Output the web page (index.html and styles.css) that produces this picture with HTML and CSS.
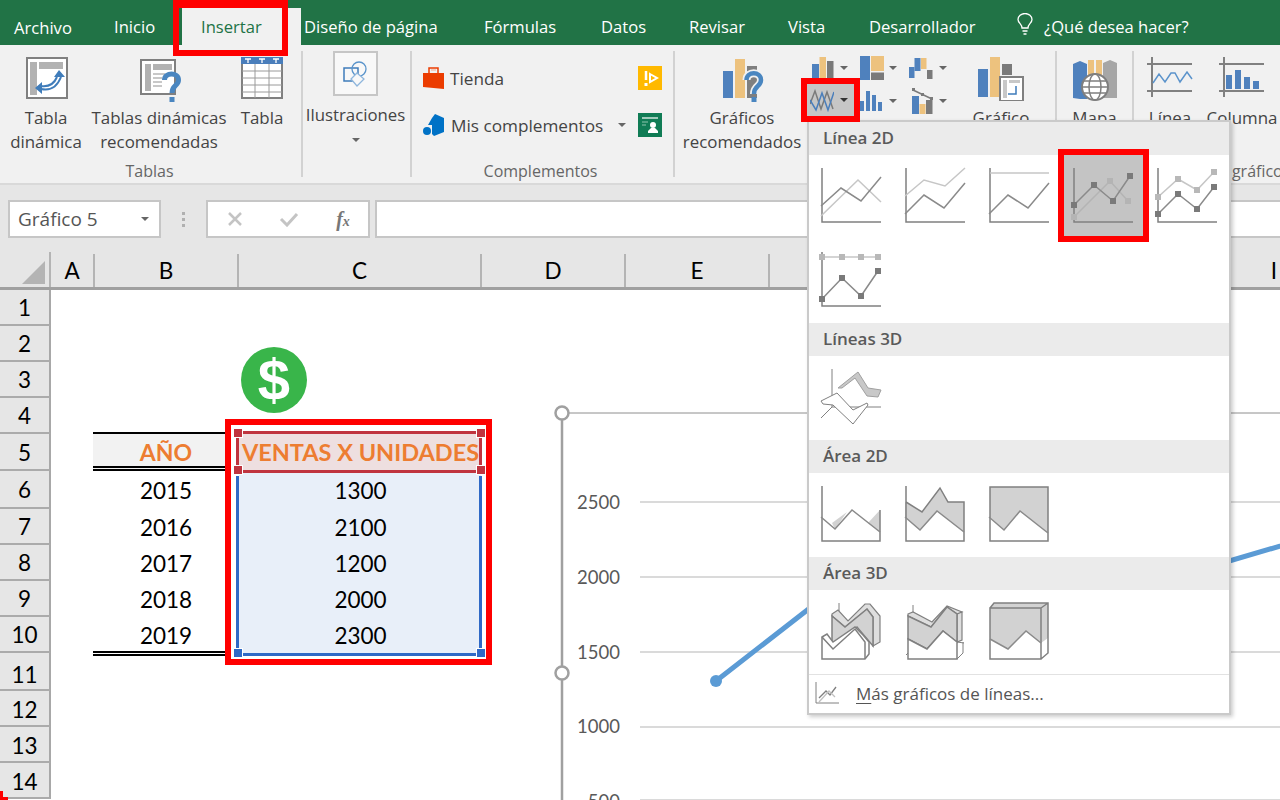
FILE: index.html
```html
<!DOCTYPE html>
<html lang="es">
<head>
<meta charset="utf-8">
<title>Excel - Insertar gráfico</title>
<link rel="stylesheet" href="styles.css">
</head>
<body>
<div class="app">
  <nav class="tabs">
    <span class="tab tab-file">Archivo</span>
    <span class="tab">Inicio</span>
    <span class="tab tab-active">Insertar</span>
    <span class="tab">Diseño de página</span>
    <span class="tab">Fórmulas</span>
    <span class="tab">Datos</span>
    <span class="tab">Revisar</span>
    <span class="tab">Vista</span>
    <span class="tab">Desarrollador</span>
    <svg class="bulb" width="16" height="22" viewBox="0 0 16 22"><path d="M5 15 C5 11 1 10 1 6.500 A7 6 0 0 1 15 6.500 C15 10 11 11 11 15 Z M5.500 18 H10.500 M6.500 21 H9.500" fill="none" stroke="#fff" stroke-width="1.300"/></svg>
    <span class="tab">¿Qué desea hacer?</span>
  </nav>

  <section class="ribbon">
    <div class="group g-tablas">
      <div class="group-body cols-tablas">
        <div class="big">
          <div class="big-icon">
            <svg class="ic-din" width="42" height="42" viewBox="0 0 42 42"><rect x="1" y="1" width="40" height="40" fill="#fff" stroke="#808080" stroke-width="2"/><rect x="4" y="5" width="7" height="33" fill="#b2b2b2"/><rect x="13" y="5" width="24" height="7" fill="#b2b2b2"/><path d="M15 32 C24 34 31 30 35 20 M15 29 C22 30 28 27 31 20" fill="none" stroke="#3f7cba" stroke-width="2"/><path d="M33 13 L39 20 H28 Z M9 31 L16 25 V37 Z" fill="#3f7cba"/></svg>
          </div>
          <span class="big-text">Tabla<br>dinámica</span>
        </div>
        <div class="big">
          <div class="big-icon">
            <svg class="ic-rec ic-rec-t" width="42" height="44" viewBox="0 0 42 44"><rect x="1" y="1" width="34" height="34" fill="#fff" stroke="#808080" stroke-width="2"/><rect x="5" y="5" width="6" height="27" fill="#b2b2b2"/><rect x="13" y="5" width="19" height="6" fill="#b2b2b2"/><path d="M13 15 H25 M13 19 H22 M13 23 H22 M13 27 H22" stroke="#c8c8c8" stroke-width="2"/><path d="M24.500 21 C24.500 13 38.500 13 38.500 21 C38.500 27 32 26 32 34" fill="none" stroke="#4a86c0" stroke-width="5"/><rect x="29.500" y="38" width="5" height="5" fill="#4a86c0"/></svg>
          </div>
          <span class="big-text">Tablas dinámicas<br>recomendadas</span>
        </div>
        <div class="big">
          <div class="big-icon">
            <svg width="42" height="42" viewBox="0 0 42 42"><rect x="1" y="1" width="40" height="40" fill="#fff" stroke="#808080" stroke-width="2"/><rect width="42" height="7" fill="#4a7ebb"/><path d="M4 2 H10 M7 2 V6 M18 2 H24 M21 2 V6 M32 2 H38 M35 2 V6" stroke="#fff" stroke-width="1.300"/><path d="M14 7 V41 M28 7 V41 M1 14 H41 M1 21 H41 M1 28 H41 M1 35 H41" stroke="#9a9a9a" stroke-width="1"/></svg>
          </div>
          <span class="big-text">Tabla</span>
        </div>
      </div>
      <div class="group-label">Tablas</div>
    </div>

    <div class="group g-ilus">
      <div class="group-body ilus">
        <div class="ilus-box">
          <svg width="26" height="26" viewBox="0 0 26 26"><rect x="1" y="7" width="14" height="13" fill="none" stroke="#3f7cba" stroke-width="1.500"/><circle cx="16" cy="8" r="7" fill="none" stroke="#5a94cb" stroke-width="1.300"/><path d="M14 12 L21 18 L14 25 L8 18 Z" fill="#f8f8f8" stroke="#8fb6dc" stroke-width="1.300"/></svg>
        </div>
        <span class="ilus-text">Ilustraciones</span>
        <i class="caret"></i>
      </div>
    </div>

    <div class="group g-comp">
      <div class="group-body addins">
        <div class="addin-row">
          <svg width="22" height="24" viewBox="0 0 22 24"><path d="M6 7 V2 H15 V7" fill="none" stroke="#eb3c00" stroke-width="1.500"/><path d="M8 4 H13" stroke="#f7a58a" stroke-width="1"/><path d="M0 7 H21 V23 L0 21 Z" fill="#eb3c00"/></svg>
          <span class="addin-text">Tienda</span>
          <svg class="square" width="24" height="24" viewBox="0 0 24 24"><rect width="24" height="24" fill="#ffb900"/><path d="M8 5 V14" stroke="#fff" stroke-width="2.500"/><path d="M12 8 L19 12 L12 16 Z" fill="#ffb900" stroke="#fff" stroke-width="2"/><rect x="6.500" y="17" width="3" height="3" fill="#fff"/></svg>
        </div>
        <div class="addin-row">
          <svg width="22" height="22" viewBox="0 0 22 22"><path d="M12 0 L21 4 V18 L11 22 L9 20 V11 H5 L9 4 Z" fill="#0072c6"/><circle cx="4" cy="17" r="4" fill="#0072c6"/></svg>
          <span class="addin-text addin-mis">Mis complementos</span>
          <i class="caret caret-addin"></i>
          <svg class="square-b" width="24" height="24" viewBox="0 0 24 24"><rect width="24" height="24" fill="#107c55"/><path d="M4 5 H20" stroke="#cfe6dc" stroke-width="1.500"/><path d="M4 9 H10 M4 12 H8" stroke="#8fc4ae" stroke-width="1"/><circle cx="15" cy="12" r="3" fill="#fff"/><path d="M10 20 H20 V18 L17 15 H13 L10 18 Z" fill="#fff"/></svg>
        </div>
      </div>
      <div class="group-label">Complementos</div>
    </div>

    <div class="group g-charts">
      <div class="group-body charts">
        <div class="big big-rec">
          <div class="big-icon">
            <svg class="ic-rec ic-rec-c" width="42" height="44" viewBox="0 0 42 44"><rect y="12" width="10" height="27" fill="#4f81bd"/><rect x="12" width="10" height="39" fill="#edc27e"/><rect x="24" y="7" width="10" height="32" fill="#7f7f7f"/><path d="M23.500 21 C23.500 12 38 12 38 21 C38 28 31 26 31 35" fill="none" stroke="#f1f1f1" stroke-width="8"/><path d="M23.500 21 C23.500 12 38 12 38 21 C38 28 31 26 31 35" fill="none" stroke="#4a86c0" stroke-width="4.500"/><rect x="28.500" y="38" width="5" height="5" fill="#4a86c0"/></svg>
          </div>
          <span class="big-text">Gráficos<br>recomendados</span>
        </div>
        <div class="smalls">
          <div class="small s1">
            <svg width="24" height="22" viewBox="0 0 24 22"><rect y="7" width="7" height="14" fill="#4f81bd"/><rect x="7.500" width="6.500" height="21" fill="#edc27e"/><rect x="15" y="4" width="6.500" height="17" fill="#7a7a7a"/></svg>
            <i class="caret"></i>
          </div>
          <div class="small s2">
            <svg width="24" height="24" viewBox="0 0 24 24"><rect width="10" height="24" fill="#4f81bd"/><rect x="11" width="13" height="15" fill="#edc27e"/><rect x="11" y="16.500" width="13" height="7.500" fill="#7a7a7a"/></svg>
            <i class="caret"></i>
          </div>
          <div class="small s3">
            <svg width="24" height="24" viewBox="0 0 24 24"><rect y="11" width="5.500" height="11" fill="#4f81bd"/><rect x="5.500" y="2" width="6" height="13" fill="#4f81bd"/><rect x="12" y="2" width="5.500" height="11" fill="#edc27e"/><rect x="18" y="14" width="5.500" height="9" fill="#7a7a7a"/></svg>
            <i class="caret"></i>
          </div>
          <div class="small s1 s-active">
            <svg width="24" height="24" viewBox="0 0 24 24"><path d="M0 16 L5 3 L11 21 L17 4 L23 21" fill="none" stroke="#7a7a7a" stroke-width="1.500"/><path d="M0 12 L6 22 L12 5 L18 22 L24 4" fill="none" stroke="#4a7ebb" stroke-width="1.500"/></svg>
            <i class="caret caret-dark"></i>
          </div>
          <div class="small s2">
            <svg width="24" height="22" viewBox="0 0 24 22"><rect y="11" width="4" height="10" fill="#4f81bd"/><rect x="6" y="1" width="4" height="20" fill="#4f81bd"/><rect x="12" y="5" width="4" height="16" fill="#4f81bd"/><rect x="18" y="12" width="4" height="9" fill="#4f81bd"/></svg>
            <i class="caret"></i>
          </div>
          <div class="small s3 s3b">
            <svg width="22" height="26" viewBox="0 0 22 26"><rect y="8" width="7" height="18" fill="#4f81bd"/><rect x="7.500" y="16" width="6" height="10" fill="#edc27e"/><rect x="14" y="12" width="6.500" height="14" fill="#7a7a7a"/><path d="M1 2 L20 11" stroke="#7a7a7a" stroke-width="1.500"/><path d="M0 0 H3 V3 H0 Z M9 5 H12 V8 H9 Z M18 9 H21 V12 H18 Z" fill="#7a7a7a"/></svg>
            <i class="caret"></i>
          </div>
        </div>
        <div class="big big-din">
          <div class="big-icon">
            <svg width="46" height="44" viewBox="0 0 46 44"><rect y="12" width="10" height="28" fill="#4f81bd"/><rect x="12" width="10" height="40" fill="#edc27e"/><rect x="24" y="7" width="10" height="11" fill="#7a7a7a"/><rect x="22" y="20" width="23" height="24" fill="#fff" stroke="#808080" stroke-width="2"/><rect x="25" y="23" width="4" height="18" fill="#c8c8c8"/><rect x="31" y="23" width="11" height="3" fill="#c8c8c8"/><path d="M30 37 H38 V29" fill="none" stroke="#3f7cba" stroke-width="1.500"/></svg>
          </div>
          <span class="big-text">Gráfico<br>dinámico</span>
        </div>
      </div>
      <div class="group-label">Gráficos</div>
    </div>

    <div class="group g-mapa">
      <div class="group-body">
        <div class="big">
          <div class="big-icon">
            <svg width="44" height="44" viewBox="0 0 44 44"><path d="M0 7 L7 4 V42 L0 41 Z M7 4 L14 7 V42 H7 Z" fill="#4f81bd"/><path d="M15 3 H21 V28 H15 Z M23 3 H29 V28 H23 Z" fill="#edc27e"/><path d="M30 6 L37 3 V41 H30 Z M37 3 L44 6 V41 H37 Z" fill="#a6a6a6"/><circle cx="22" cy="30" r="13" fill="#fff" stroke="#7f7f7f" stroke-width="2"/><path d="M9 30 H35 M11 24 H33 M11 36 H33" stroke="#7f7f7f" stroke-width="1.500"/><ellipse cx="22" cy="30" rx="6" ry="13" fill="none" stroke="#7f7f7f" stroke-width="1.500"/></svg>
          </div>
          <span class="big-text">Mapa</span>
        </div>
      </div>
      <div class="group-label">Paseos</div>
    </div>

    <div class="group g-mini">
      <div class="group-body minis">
        <div class="big big-mini">
          <div class="big-icon">
            <svg width="46" height="40" viewBox="0 0 46 40"><path d="M0 7 H45 M0 34 H45 M5 0 V40" stroke="#808080" stroke-width="2"/><path d="M6 26 L12 17 L18 25 L24 16 L28 16 L33 25 L40 15 L45 22" fill="none" stroke="#5b93cb" stroke-width="1.500"/></svg>
          </div>
          <span class="big-text">Línea</span>
        </div>
        <div class="big big-mini">
          <div class="big-icon">
            <svg width="46" height="40" viewBox="0 0 46 40"><path d="M0 7 H45 M0 34 H45 M5 0 V40" stroke="#808080" stroke-width="2"/><path d="M7 18 h6 v14 h-6 Z M16 13 h6 v19 h-6 Z M25 20 h6 v12 h-6 Z M34 24 h6 v8 h-6 Z" fill="#4f81bd"/></svg>
          </div>
          <span class="big-text">Columna</span>
        </div>
      </div>
      <div class="group-label">Minigráficos</div>
    </div>
  </section>

  <section class="formula">
    <div class="namebox"><span>Gráfico 5</span><i class="caret"></i></div>
    <div class="dots"><i></i><i></i><i></i></div>
    <div class="fxbox">
      <svg width="16" height="16" viewBox="0 0 16 16"><path d="M2 2 L14 14 M14 2 L2 14" stroke="#c4c4c4" stroke-width="2.500"/></svg>
      <svg width="20" height="16" viewBox="0 0 20 16"><path d="M2 8 L8 14 L18 3" fill="none" stroke="#c4c4c4" stroke-width="3"/></svg>
      <span class="fx">f<small>x</small></span>
    </div>
    <div class="fxinput"></div>
  </section>

  <section class="sheet">
    <div class="colhead">
      <div class="corner"><i></i></div>
      <div class="ch ch-a">A</div>
      <div class="ch ch-b">B</div>
      <div class="ch ch-c">C</div>
      <div class="ch ch-b">D</div>
      <div class="ch ch-b">E</div>
      <div class="ch ch-b">F</div>
      <div class="ch ch-b">G</div>
      <div class="ch ch-b">H</div>
      <div class="ch ch-i">I</div>
    </div>
    <div class="row r36"><div class="rh">1</div></div>
    <div class="row r36"><div class="rh">2</div></div>
    <div class="row r36"><div class="rh">3</div></div>
    <div class="row r36"><div class="rh">4</div><div></div><div class="b4"></div></div>
    <div class="row r37"><div class="rh">5</div><div></div><div class="cell th thb">AÑO</div><div class="cell th thc">VENTAS X UNIDADES</div></div>
    <div class="row r38"><div class="rh">6</div><div></div><div class="cell yr">2015</div><div class="cell val">1300</div></div>
    <div class="row r36"><div class="rh">7</div><div></div><div class="cell yr">2016</div><div class="cell val">2100</div></div>
    <div class="row r36"><div class="rh">8</div><div></div><div class="cell yr">2017</div><div class="cell val">1200</div></div>
    <div class="row r36"><div class="rh">9</div><div></div><div class="cell yr">2018</div><div class="cell val">2000</div></div>
    <div class="row r36"><div class="rh">10</div><div></div><div class="cell yr yr-end">2019</div><div class="cell val">2300</div></div>
    <div class="row r38"><div class="rh rh-low">11</div></div>
    <div class="row r36"><div class="rh rh-l2">12</div></div>
    <div class="row r36"><div class="rh rh-l2">13</div></div>
    <div class="row r36"><div class="rh rh-l2">14</div></div>

    <i class="redbox rb-sel"></i>
    <i class="sel-red-line srl-top"></i>
    <i class="sel-red-line srl-bottom"></i>
    <i class="sel-red-line srl-left"></i>
    <i class="sel-red-line srl-right"></i>
    <i class="sel-blue-line sbl-left"></i>
    <i class="sel-blue-line sbl-right"></i>
    <i class="sel-blue-line sbl-bottom"></i>
    <i class="handle h-r h1"></i><i class="handle h-r h2"></i><i class="handle h-r h3"></i><i class="handle h-r h4"></i>
    <i class="handle h-b h5"></i><i class="handle h-b h6"></i>
    <div class="dollar">$</div>
    <i class="red-corner"></i>

    <div class="chart">
      <svg width="730" height="400" viewBox="0 0 730 400">
        <path d="M12 13 H730" stroke="#8e8e8e" stroke-width="1"/>
        <path d="M12 13 V400" stroke="#a0a0a0" stroke-width="2.500"/>
        <path d="M90 102 H730 M90 177 H730 M90 252 H730 M90 327 H730 M90 400 H730" stroke="#dadada" stroke-width="2"/>
        <circle cx="12" cy="13" r="6.500" fill="#fff" stroke="#a0a0a0" stroke-width="2.500"/>
        <circle cx="12" cy="273" r="6.500" fill="#fff" stroke="#a0a0a0" stroke-width="2.500"/>
        <polyline points="166,281 319,162 472,297 625,177 778,132" fill="none" stroke="#5b9bd5" stroke-width="5" stroke-linejoin="round"/>
        <circle cx="166" cy="281" r="6" fill="#5b9bd5"/>
      </svg>
      <div class="axis"><span>2500</span><span>2000</span><span>1500</span><span>1000</span><span>500</span></div>
    </div>
  </section>

  <aside class="menu">
    <div class="menu-head">Línea 2D</div>
    <div class="tiles">
      <svg class="tile" viewBox="0 0 60 56"><path class="ax" d="M1 0 V54 H60"/><path class="lt" d="M0 48 L37 12 L60 34"/><path class="dk" d="M0 38 L20 20 L40 33 L60 9"/></svg>
      <svg class="tile" viewBox="0 0 60 56"><path class="ax" d="M1 0 V54 H60"/><path class="lt" d="M0 28 L19 12 L40 18 L60 0"/><path class="dk" d="M0 46 L19 27 L39 40 L60 15"/></svg>
      <svg class="tile" viewBox="0 0 60 56"><path class="ax" d="M1 0 V54 H60"/><path class="lt" d="M1 5 H60"/><path class="dk" d="M0 46 L19 27 L39 40 L60 15"/></svg>
      <div class="tile-hl">
        <svg class="tile" viewBox="0 0 60 56"><path class="ax" d="M1 0 V54 H60"/><path class="lt-on" d="M1 49 L37 13 L55 33"/><path class="mk-on" d="M-2 46 h6 v6 h-6 Z M34 10 h6 v6 h-6 Z M52 30 h6 v6 h-6 Z"/><path class="dk" d="M1 37 L21 17 L40 33 L57 8"/><path class="mk" d="M-2 34 h6 v6 h-6 Z M18 14 h6 v6 h-6 Z M37 30 h6 v6 h-6 Z M54 5 h6 v6 h-6 Z"/></svg>
      </div>
      <svg class="tile" viewBox="0 0 60 56"><path class="ax" d="M1 0 V54 H60"/><path class="lt" d="M1 29 L21 11 L40 22 L57 4"/><path class="mk-lt" d="M-2 26 h6 v6 h-6 Z M18 8 h6 v6 h-6 Z M37 19 h6 v6 h-6 Z M54 1 h6 v6 h-6 Z"/><path class="dk" d="M1 46 L21 26 L40 41 L57 19"/><path class="mk" d="M-2 43 h6 v6 h-6 Z M18 23 h6 v6 h-6 Z M37 38 h6 v6 h-6 Z M54 16 h6 v6 h-6 Z"/></svg>
      <svg class="tile" viewBox="0 0 60 56"><path class="ax" d="M1 0 V54 H60"/><path class="lt" d="M1 5 H57"/><path class="mk-lt" d="M-2 2 h6 v6 h-6 Z M18 2 h6 v6 h-6 Z M37 2 h6 v6 h-6 Z M54 2 h6 v6 h-6 Z"/><path class="dk" d="M1 47 L21 26 L40 44 L57 19"/><path class="mk" d="M-2 44 h6 v6 h-6 Z M18 23 h6 v6 h-6 Z M37 41 h6 v6 h-6 Z M54 16 h6 v6 h-6 Z"/></svg>
    </div>
    <div class="menu-head">Líneas 3D</div>
    <div class="tiles">
      <svg class="tile" viewBox="0 0 60 56"><path class="thin" d="M11 0 V38 H60 M11 38 L0 49"/><path class="fill-g" d="M17 19 L37 3 L47 19 L60 21 L57 28 L46 27 L34 9 L21 19 Z"/><path class="fill-w" d="M0 32 L16 24 L32 41 L46 34 L47 36 L32 55 L12 36 L2 35 Z"/></svg>
    </div>
    <div class="menu-head">Área 2D</div>
    <div class="tiles">
      <svg class="tile" viewBox="0 0 60 56"><path class="fill-s" d="M11 37 L26 26 L14 43 Z M47 37 L59 24 V46 Z"/><path class="ax" d="M1 0 V55 H59 V24"/><path class="dk" d="M0 31 L14 43 L31 24 L59 46"/></svg>
      <svg class="tile" viewBox="0 0 60 56"><path class="fill-s" d="M0 16 L17 26 L35 2 L43 16 H59 V46 L32 25 L15 44 L0 31 Z"/><path class="ax" d="M1 0 V55 H59 V16 H43 L35 2 L17 26 L1 16"/><path class="dk" d="M0 31 L15 44 L32 25 L59 46"/></svg>
      <svg class="tile" viewBox="0 0 60 56"><path class="fill-s" d="M1 1 H59 V47 L31 25 L15 44 L1 31 Z"/><path class="ax" d="M1 1 H59 V55 H1 Z"/><path class="dk" d="M0 31 L15 44 L31 25 L59 47"/></svg>
    </div>
    <div class="menu-head">Área 3D</div>
    <div class="tiles">
      <svg class="tile" viewBox="0 0 60 56"><path class="thin" d="M18 0 V8"/><path class="fill-l" d="M11 11 L17 7 L27 18 L44 1 H49 L59 13 V39 L52 43 V14 L46 6 L24 24 L11 13 Z"/><path class="fill-t" d="M11 13 L24 24 L46 6 L52 14 V43 L36 24 L11 43 Z"/><path class="ax-fill" d="M1 34 L6 31 L12 39 L34 24 L42 32 L48 39 V51 L44 56 H1 Z"/><path class="ax" d="M1 34 L12 46 L34 26 L44 39 V56"/></svg>
      <svg class="tile" viewBox="0 0 60 56"><path class="thin" d="M8 2 V11"/><path class="fill-l" d="M3 11 L8 9 L27 19 L42 3 L57 9 L52 11 V39 L57 37 V9 L52 11 L42 4 L26 24 L3 13 Z"/><path class="fill-t" d="M3 13 L26 24 L42 4 L52 11 V39 L38 28 L22 46 L3 36 Z"/><path class="ax-fill" d="M3 36 L22 46 L38 28 L52 39 V56 H3 Z"/><path class="thin" d="M52 56 L58 50 V39 M52 39 L59 40 M3 50 L1 52"/></svg>
      <svg class="tile" viewBox="0 0 60 56"><path class="fill-s" d="M1 5 L5 0 H59 V35 L52 40 L37 28 L19 46 L1 36 Z"/><path class="ax" d="M1 5 H52 V56 H1 Z M1 5 L5 0 H59 V50 L52 56 M52 5 L59 0"/><path class="dk" d="M1 36 L19 46 L37 28 L52 40"/></svg>
    </div>
    <div class="menu-more">
      <svg width="24" height="24" viewBox="0 0 24 24"><path d="M1 1 V22 H24" fill="none" stroke="#808080" stroke-width="1"/><path d="M4 17 L11 10 L15 14 L21 6" fill="none" stroke="#7f7f7f" stroke-width="1.300"/><path d="M4 21 L14 10 L20 16" fill="none" stroke="#c0c0c0" stroke-width="1.300"/></svg>
      <span><u>M</u>ás gráficos de líneas...</span>
    </div>
  </aside>

  <i class="redbox rb-tab"></i>
  <i class="redbox rb-chart"></i>
</div>
</body>
</html>
```
FILE: styles.css
```css
* { box-sizing: border-box; }
html, body { margin: 0; padding: 0; }
body { background: #fff; }
i { display: block; }

.app {
  position: relative;
  width: 1280px;
  height: 800px;
  overflow: hidden;
  display: flex;
  flex-direction: column;
  font-family: "Open Sans", "Noto Sans", sans-serif;
  color: #444;
  background: #fff;
}

/* Tabs */
.tabs {
  flex: none;
  height: 45px;
  background: #217346;
  padding-left: 14px;
  display: grid;
  grid-template-columns: 100px 87px 103px 180px 117px 88px 99px 81px 148px 27px 1fr;
  align-items: center;
  color: #fff;
  font-size: 16.600px;
  white-space: nowrap;
}
.tab { position: relative; padding-top: 10px; line-height: 34px; height: 45px; }
.tab-file { padding-top: 11px; }
.tab-active { color: #217346; z-index: 0; }
.tab-active::before {
  content: "";
  position: absolute;
  left: -19px;
  right: 3px;
  top: 8px;
  bottom: 0;
  background: #f1f1f1;
  z-index: -1;
}
.bulb { display: block; margin-top: 2px; }

/* Ribbon */
.ribbon {
  flex: none;
  height: 140px;
  background: #f1f1f1;
  border-bottom: 2px solid #d9d9d9;
  padding-top: 6px;
  display: flex;
  overflow: hidden;
}
.group {
  flex: none;
  height: 126px;
  display: flex;
  flex-direction: column;
  border-right: 2px solid #d2d2d2;
}
.g-tablas { width: 303px; }
.g-ilus { width: 109px; }
.g-comp { width: 263px; }
.g-charts { width: 382px; }
.g-mapa { width: 77px; }
.g-mini { width: 222px; border-right: 0; }
.group-body { flex: 1; display: flex; min-height: 0; }
.group-label {
  flex: none;
  height: 22px;
  margin-bottom: -5px;
  line-height: 22px;
  text-align: center;
  font-size: 16px;
  color: #666;
  white-space: nowrap;
}
.g-tablas .group-label { padding-right: 2px; }
.g-comp .group-label { padding-right: 4px; }
.cols-tablas { display: grid; grid-template-columns: 92px 134px 72px; }
.big {
  display: flex;
  flex-direction: column;
  align-items: center;
  white-space: nowrap;
}
.big-icon { height: 55px; padding-top: 6px; }
.big-icon svg { display: block; }
.big-icon .ic-din { margin-left: 1px; }
.big-icon .ic-rec { margin-top: 2px; }
.big-icon .ic-rec-t { margin-left: 3px; }
.big-icon .ic-rec-c { margin-left: 4px; }
.big-text {
  font-size: 16.900px;
  line-height: 24px;
  text-align: center;
}
.g-mapa .big { width: 75px; }

.ilus { flex-direction: column; align-items: center; padding-right: 2px; }
.ilus-box {
  width: 45px;
  height: 45px;
  border: 2px solid #c6c6c6;
  background: #f8f8f8;
  display: flex;
  align-items: center;
  justify-content: center;
}
.ilus-text { margin-top: 7px; font-size: 16.800px; line-height: 24px; white-space: nowrap; }
.ilus .caret { margin-top: 11px; }

.caret {
  width: 0;
  height: 0;
  flex: none;
  border-left: 4px solid transparent;
  border-right: 4px solid transparent;
  border-top: 4px solid #666;
}
.caret-dark { border-top-color: #333; }

.addins { flex-direction: column; padding: 15px 0 0 11px; gap: 23px; }
.addin-row { display: flex; align-items: center; width: 239px; height: 24px; }
.addin-row svg { display: block; flex: none; }
.addin-text { margin-left: 5px; font-size: 17.200px; white-space: nowrap; }
.addin-mis { margin-left: 6px; }
.square { margin-left: auto; }
.caret-addin { margin-left: auto; }
.square-b { margin-left: 12px; }

.charts { align-items: flex-start; }
.big-rec { width: 134px; margin-right: -2px; flex: none; }
.smalls {
  flex: none;
  display: grid;
  grid-template-columns: 52px 50px 50px;
  grid-template-rows: 33px 34px;
}
.small { display: flex; align-items: center; position: relative; }
.small .caret { position: absolute; }
.small svg { display: block; position: relative; }
.s1 svg { left: 5px; }
.s1 .caret { left: 33px; }
.s2 svg { left: 1px; }
.s2 .caret { left: 30px; }
.s3 svg { left: 0; }
.s3 .caret { left: 30px; }
.s3b svg { left: 3px; }
.s-active { background: #c6c6c6; width: 47px; height: 32px; }
.s-active svg { left: 3px; }
.big-din { width: 84px; flex: none; }

.minis .big { width: 72px; flex: none; }

/* Formula bar */
.formula {
  flex: none;
  height: 67px;
  background: #e6e6e6;
  padding: 15px 0 14px 8px;
  display: flex;
}
.namebox {
  width: 153px;
  background: #fff;
  border: 2px solid #c6c6c6;
  display: flex;
  align-items: center;
  justify-content: space-between;
  padding: 0 10px 0 8px;
  font-size: 19px;
  color: #555;
}
.dots {
  width: 45px;
  display: flex;
  flex-direction: column;
  align-items: center;
  justify-content: center;
  gap: 3px;
}
.dots i { width: 3px; height: 3px; background: #b0b0b0; }
.fxbox {
  width: 164px;
  background: #fff;
  border: 2px solid #c6c6c6;
  display: grid;
  grid-template-columns: 54px 54px 54px;
  justify-items: center;
  align-items: center;
  padding-left: 0;
}
.fx { font-family: "Liberation Serif", serif; font-style: italic; font-size: 20px; color: #777; font-weight: 700; }
.fx small { font-size: 14px; }
.fxinput { flex: 1; margin-left: 5px; background: #fff; border: 2px solid #c6c6c6; border-right: 0; }

/* Sheet */
.sheet {
  flex: 1;
  position: relative;
  font-family: Lato, "Liberation Sans", sans-serif;
  color: #000;
  font-size: 22.500px;
  min-height: 0;
}
.colhead {
  height: 38px;
  background: #e6e6e6;
  border-bottom: 3px solid #a0a0a0;
  display: flex;
}
.corner { width: 51px; flex: none; padding: 9px 0 0 22px; border-right: 2px solid #b4b4b4; }
.corner i {
  width: 23px;
  height: 23px;
  background: #b4b4b4;
  clip-path: polygon(100% 0, 100% 100%, 0 100%);
}
.ch {
  flex: none;
  display: flex;
  align-items: center;
  justify-content: center;
  border-right: 2px solid #b4b4b4;
  margin-top: 2px;
}
.ch-a { width: 44px; }
.ch-b { width: 144px; }
.ch-c { width: 243px; }
.ch-i { width: 144px; border-right: 0; }

.row { display: grid; grid-template-columns: 51px 44px 144px 243px; }
.r36 { height: 36px; }
.r37 { height: 37px; }
.r38 { height: 38px; }
.rh {
  background: #e6e6e6;
  border-right: 2px solid #a8a8a8;
  border-bottom: 2px solid #ababab;
  display: flex;
  align-items: center;
  justify-content: center;
  padding-top: 1px;
}
.rh-low { padding-top: 6px; }
.rh-l2 { padding-top: 3px; }
.b4 { border-bottom: 2px solid #000; margin-left: -2px; }
.cell { display: flex; align-items: center; justify-content: center; white-space: nowrap; }
.th { color: #ed7d31; font-weight: 700; font-size: 23.500px; padding-bottom: 1px; }
.thb { margin-left: -2px; background: #f2f2f2; border-bottom: 5px double #000; padding: 3px 0 0; font-size: 23px; }
.thc { background: #eedfe0; }
.yr { margin-left: -2px; }
.yr-end { position: relative; }
.yr-end::after {
  content: "";
  position: absolute;
  left: 0;
  right: 0;
  bottom: -3px;
  height: 1px;
  border-top: 2px solid #000;
  border-bottom: 2px solid #000;
}
.val { background: #e8eff9; }

.sel-red-line, .sel-blue-line, .handle, .redbox, .dollar, .red-corner, .chart { position: absolute; }
/* Sheet offsets are measured from y=252 */
.sel-red-line { background: #c0343f; }
.srl-top { left: 236px; top: 179px; width: 246px; height: 3px; }
.srl-bottom { left: 236px; top: 218px; width: 246px; height: 3px; }
.srl-left { left: 236px; top: 179px; width: 3px; height: 42px; }
.srl-right { left: 479px; top: 179px; width: 3px; height: 42px; }
.sel-blue-line { background: #2f69c6; }
.sbl-left { left: 236px; top: 224px; width: 3px; height: 180px; }
.sbl-right { left: 479px; top: 224px; width: 3px; height: 180px; }
.sbl-bottom { left: 236px; top: 401px; width: 246px; height: 3px; }
.handle { width: 10px; height: 10px; border: 1px solid #fff; }
.h-r { background: #c0343f; }
.h-b { background: #2f69c6; }
.h1 { left: 233px; top: 176px; }
.h2 { left: 476px; top: 176px; }
.h3 { left: 233px; top: 213px; }
.h4 { left: 476px; top: 213px; }
.h5 { left: 233px; top: 396px; }
.h6 { left: 476px; top: 396px; }

.redbox { border: 6px solid #ff0000; }
.rb-sel {
  left: 225px;
  top: 167px;
  width: 267px;
  height: 246px;
  box-shadow: inset 0 0 0 5px #fff;
}
.rb-tab { left: 173px; top: 0; width: 115px; height: 56px; border-top-width: 8px; }
.rb-chart { left: 801px; top: 78px; width: 59px; height: 44px; z-index: 3; }

.dollar {
  left: 241px;
  top: 95px;
  width: 66px;
  height: 66px;
  border-radius: 50%;
  background: #39b54a;
  color: #fff;
  font-family: "Liberation Sans", sans-serif;
  font-weight: 700;
  font-size: 58px;
  line-height: 66px;
  text-align: center;
}
.red-corner {
  left: 0;
  top: 539px;
  width: 8px;
  height: 9px;
  border-left: 3px solid #ff0000;
  border-bottom: 3px solid #ff0000;
}

.chart { left: 550px; top: 148px; width: 730px; height: 400px; overflow: hidden; }
.chart svg { display: block; }
.axis {
  position: absolute;
  left: 27px;
  top: 64px;
  width: 43px;
  display: flex;
  flex-direction: column;
  color: #595959;
  font-size: 18.500px;
  text-align: right;
}
.axis span { height: 74.800px; line-height: 76px; }

/* Menu */
.menu {
  position: absolute;
  left: 807px;
  top: 120px;
  width: 424px;
  height: 595px;
  background: #fff;
  border: 2px solid #cacaca;
  box-shadow: 2px 2px 4px rgba(0, 0, 0, .2);
  z-index: 2;
}
.menu-head {
  height: 33px;
  line-height: 31px;
  padding-left: 14px;
  background: #ebebeb;
  color: #5a5a5a;
  font-size: 17px;
  font-weight: 600;
}
.tiles {
  display: grid;
  grid-template-columns: repeat(5, 60px);
  grid-auto-rows: 56px;
  column-gap: 24px;
  row-gap: 28px;
  padding: 13px 12px 15px;
}
.tile { display: block; width: 60px; height: 56px; overflow: visible; }
.tile-hl { position: relative; width: 60px; height: 56px; }
.tile-hl::before {
  content: "";
  position: absolute;
  left: -15px;
  top: -19px;
  width: 79px;
  height: 81px;
  border: 6px solid #ff0000;
  background: #c4c4c4;
}
.tile-hl .tile { position: relative; }
.ax, .dk, .lt, .lt-on, .thin { fill: none; }
.ax { stroke: #808080; stroke-width: 1.500; }
.dk { stroke: #8a8a8a; stroke-width: 1.500; }
.lt { stroke: #c6c6c6; stroke-width: 1.500; }
.lt-on { stroke: #b4b4b4; stroke-width: 1.500; }
.mk { fill: #7a7a7a; }
.mk-on { fill: #b4b4b4; }
.mk-lt { fill: #b8b8b8; }
.thin { stroke: #808080; stroke-width: 1; }
.fill-g { fill: #c8c8c8; stroke: #a0a0a0; stroke-width: 1; }
.fill-w { fill: #fff; stroke: #808080; stroke-width: 1; }
.fill-s { fill: #d2d2d2; }
.fill-t { fill: #d2d2d2; stroke: #808080; stroke-width: 1.500; }
.fill-l { fill: #dedede; stroke: #808080; stroke-width: 1.200; }
.ax-fill { fill: #fff; stroke: #808080; stroke-width: 1.500; }
.menu-more {
  height: 39px;
  border-top: 1px solid #e2e2e2;
  display: flex;
  align-items: center;
  padding: 0 0 2px 6px;
  font-size: 17px;
  color: #555;
}
.menu-more svg { display: block; flex: none; }
.menu-more span { margin-left: 17px; }
.menu-more u { text-underline-offset: 3px; }
```
